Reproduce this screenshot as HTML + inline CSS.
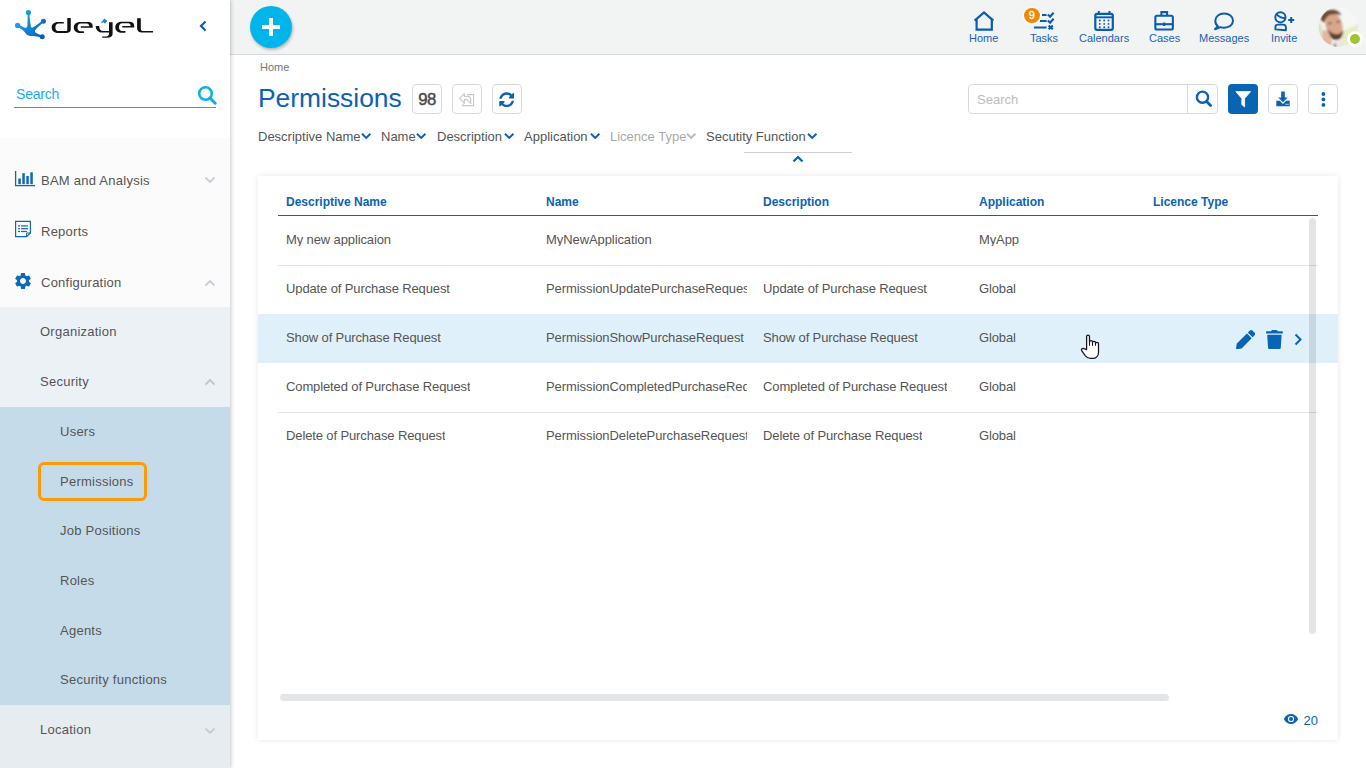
<!DOCTYPE html>
<html><head><meta charset="utf-8">
<style>
*{box-sizing:border-box;margin:0;padding:0}
html,body{width:1366px;height:768px;overflow:hidden;background:#fff;font-family:"Liberation Sans",sans-serif;color:#555}
.abs{position:absolute}
#side{position:absolute;left:0;top:0;width:230px;height:768px;background:#fff;z-index:2;box-shadow:1px 0 4px rgba(0,0,0,.22)}
#hdr{position:absolute;left:230px;top:0;width:1136px;height:55px;background:#f2f3f3;border-bottom:1px solid #d7dbe1}
.txt{position:absolute;white-space:nowrap;line-height:1}
.mi{position:absolute;left:0;width:230px;font-size:13px;color:#555}
#side .txt{letter-spacing:0.25px}
.card{position:absolute;left:258px;top:176px;width:1080px;height:564px;background:#fff;box-shadow:0 0 6px rgba(0,0,0,.10)}
.btn{position:absolute;top:84px;width:30px;height:30px;border:1px solid #d9d9d9;border-radius:4px;background:#fff}
.nav{position:absolute;top:0;width:60px;height:54px;text-align:center}
.nav .lb{position:absolute;left:0;width:60px;top:32px;font-size:11px;color:#1a63b2;line-height:12px}
.nav svg{position:absolute;left:20px;top:11px}
.th{position:absolute;top:196px;font-size:12px;font-weight:bold;color:#0b62b5;line-height:12px;white-space:nowrap}
.td{position:absolute;font-size:13px;color:#555;line-height:13px;white-space:nowrap;overflow:hidden;letter-spacing:-0.12px}
.sep{position:absolute;left:278px;width:1040px;height:1px;background:#e3e3e3}
.flt{position:absolute;top:130px;font-size:13px;color:#555;line-height:13px;white-space:nowrap}
</style></head><body>

<!-- HEADER -->
<div id="hdr"></div>
<!-- nav -->
<svg class="abs" style="left:960px;top:0" width="406" height="54" viewBox="960 0 406 54">
<g fill="none" stroke="#0b5cb0" stroke-width="2.2" stroke-linejoin="miter">
  <path d="M974.6 20.6 L984 12.4 L993.4 20.6"/>
  <path d="M976.6 19.2 V29.6 H991.8 V19.2"/>
</g>
<g fill="none" stroke="#0b5cb0">
  <path d="M1042 14.9 H1046.6 M1040 21 H1046.6 M1034 27.4 H1046.6" stroke-width="2"/>
  <path d="M1047.9 14.4 L1050.1 16.7 L1053.6 12.7 M1047.9 20.5 L1050.1 22.8 L1053.6 18.8" stroke-width="2.1"/>
  <path d="M1048.6 25.6 L1052.8 29.3 M1052.8 25.6 L1048.6 29.3" stroke-width="2.1"/>
</g>
<g fill="none" stroke="#0b5cb0">
  <rect x="1095.3" y="13.8" width="17.5" height="16" rx="1.8" stroke-width="2.2"/>
  <path d="M1095.3 17.3 H1112.8" stroke-width="1.9"/>
  <path d="M1098.8 11 V15 M1109.5 11 V15" stroke-width="2"/>
</g>
<g fill="#0b5cb0">
  <circle cx="1099.8" cy="20.5" r="0.95"/><circle cx="1104.2" cy="20.5" r="0.95"/><circle cx="1108.5" cy="20.5" r="0.95"/>
  <circle cx="1099.8" cy="23.9" r="0.95"/><circle cx="1104.2" cy="23.9" r="0.95"/><circle cx="1108.5" cy="23.9" r="0.95"/>
  <circle cx="1099.8" cy="27.2" r="0.95"/><circle cx="1104.2" cy="27.2" r="0.95"/><circle cx="1108.5" cy="27.2" r="0.95"/>
</g>
<g fill="none" stroke="#0b5cb0" stroke-width="2.1">
  <rect x="1155.35" y="15.8" width="17.5" height="13.75" rx="1.6"/>
  <path d="M1161.4 15.8 V12.1 H1167.1 V15.8"/>
  <path d="M1155.35 24.2 H1172.85"/>
</g>
<rect x="1163" y="22.4" width="2.3" height="3.6" rx="0.6" fill="#0b5cb0"/>
<g fill="none" stroke="#0b5cb0" stroke-width="2">
  <path d="M1217.8 26.2 C1215.6 24.8 1215.3 22.6 1215.3 20.6 C1215.3 16.3 1219.3 13.5 1224.2 13.5 C1229.1 13.5 1233 16.3 1233 20.6 C1233 24.9 1229.1 27.7 1224.2 27.7 C1222.8 27.7 1221.6 27.5 1220.4 27.1 L1215 29.2 Z" stroke-linejoin="round"/>
</g>
<g fill="none" stroke="#0b5cb0">
  <circle cx="1280.4" cy="17.3" r="5.1" stroke-width="2"/>
  <path d="M1276.3 14.2 C1278.5 16.6 1281.5 18.2 1285.4 18.3" stroke-width="1.9"/>
  <path d="M1275.4 29.4 L1275.4 27 C1275.4 25.6 1276.6 24.6 1278 24.6 H1283.2 C1284.8 24.6 1285.9 25.8 1285.9 27.4 V30.2 Z" stroke-width="1.9" stroke-linejoin="round"/>
  <path d="M1291.2 17.1 V23.1 M1288.2 20.1 H1294.2" stroke-width="2"/>
</g>
</svg>
<div class="abs" style="left:1023px;top:7px;width:18px;height:18px;border-radius:50%;background:#fff;opacity:.9"></div>
<div class="abs" style="left:1024px;top:7.8px;width:15.6px;height:15.6px;border-radius:50%;background:#ef8a06;color:#fff;font-size:11px;text-align:center;line-height:15.6px;-webkit-text-stroke:0.3px #fff">9</div>
<div class="txt" style="left:969px;top:33px;font-size:11px;color:#1a63b2">Home</div>
<div class="txt" style="left:1030px;top:33px;font-size:11px;color:#1a63b2">Tasks</div>
<div class="txt" style="left:1079px;top:33px;font-size:11px;color:#1a63b2">Calendars</div>
<div class="txt" style="left:1149px;top:33px;font-size:11px;color:#1a63b2">Cases</div>
<div class="txt" style="left:1199px;top:33px;font-size:11px;color:#1a63b2">Messages</div>
<div class="txt" style="left:1271px;top:33px;font-size:11px;color:#1a63b2">Invite</div>

<!-- avatar -->
<svg class="abs" style="left:1318px;top:7px" width="48" height="48" viewBox="0 0 48 48">
  <defs><clipPath id="av"><circle cx="20.4" cy="19.9" r="19.8"/></clipPath>
  <filter id="bl" x="-20%" y="-20%" width="140%" height="140%"><feGaussianBlur stdDeviation="1"/></filter></defs>
  <g clip-path="url(#av)">
    <rect x="0" y="0" width="41" height="41" fill="#f6f6f4"/>
    <g filter="url(#bl)">
    <path d="M22 26 C28 22 35 19 42 17 V42 H24 Z" fill="#e6edc8"/>
    <path d="M-1 14 L4 18 L7 34 L3 42 H-1 Z" fill="#dbe4c2"/>
    <ellipse cx="16" cy="18.5" rx="8.3" ry="13" fill="#d9a68b" transform="rotate(-14 16 18.5)"/>
    <path d="M2.5 12 C4 6 8 3 13 2.8 C18 2.6 22 4.5 23.2 8.6 C20 7 15.5 6.8 11.5 8 C8.5 9.5 7 12.5 6.8 15.5 C5 15 3.5 13.8 2.5 12 Z" fill="#6b4a34"/>
    <path d="M9.8 22.5 C10.5 29 14 33 18.5 33 C22.5 33 25 29.5 25.4 23 C23 26.5 20.5 27.6 18 27.2 C15 26.8 12.5 25 9.8 22.5 Z" fill="#5a3c2b"/>
    <path d="M10 16.6 L13.6 16.2 M18.6 14.9 L22 14.4" stroke="#4a3224" stroke-width="1.3"/>
    <path d="M4.6 24 C6.5 22.5 9 23 11 26 L14.5 36 L10 41 H4 C4.5 35 4 29 4.6 24 Z" fill="#e2b6a3"/>
    <path d="M13 41 C14 35.5 17.5 33 22 33.2 C26 33.4 28.5 35.5 30 41 Z" fill="#ebe6e0"/>
    <path d="M15.5 41 L17 35.5 L18.5 41 Z" fill="#3b3b40"/>
    </g>
  </g>
  <circle cx="37" cy="32" r="7.8" fill="#fff"/>
  <circle cx="37" cy="32" r="5" fill="#9dc52f"/>
</svg>

<!-- plus -->
<div class="abs" style="left:250px;top:6px;width:42px;height:42px;border-radius:50%;background:#00b5ec;box-shadow:1px 2px 3px rgba(0,0,0,.25)"></div>
<div class="abs" style="left:262px;top:25px;width:18px;height:3.5px;background:#fff"></div>
<div class="abs" style="left:269px;top:17.5px;width:4px;height:18.5px;background:#fff"></div>

<!-- SIDEBAR -->
<div id="side">
  <!-- logo -->
  <svg class="abs" style="left:0;top:0" width="160" height="45" viewBox="0 0 160 45">
    <defs><linearGradient id="lg" gradientUnits="userSpaceOnUse" x1="16" y1="20" x2="44" y2="38"><stop offset="0" stop-color="#1aa8ec"/><stop offset="0.5" stop-color="#0b82d4"/><stop offset="1" stop-color="#0a56ae"/></linearGradient></defs>
    <g fill="url(#lg)"><path d="M31.30 28.90 Q29.83 21.57 29.15 12.56 L27.65 12.64 Q27.85 21.67 27.10 29.10 Z"/><path d="M28.18 29.02 Q23.35 27.50 18.09 24.58 L17.11 26.22 Q22.19 29.46 25.82 32.98 Z"/><path d="M33.76 31.56 Q38.03 26.82 43.93 21.86 L42.87 20.54 Q36.78 25.26 31.24 28.44 Z"/><path d="M31.78 35.68 Q36.51 36.02 41.90 37.60 L42.50 35.80 Q37.22 33.86 33.22 31.32 Z"/>
      <ellipse cx="29.9" cy="31.4" rx="5.6" ry="4.4" transform="rotate(28 29.9 31.4)"/>
      <circle cx="28.4" cy="12.6" r="2.6"/>
      <circle cx="43.4" cy="21.2" r="2.5"/>
      <circle cx="17.6" cy="25.4" r="2.6"/>
      <circle cx="42.2" cy="36.7" r="2.5"/>
    </g>
    <g fill="#121212">
      <path d="M63.8 22 H58.5 C53.5 22 51.7 24.6 51.7 27.4 C51.7 30.3 53.5 32.9 58.5 32.9 H66 C69 32.9 70.75 31.8 70.75 29.5 V18.1 H67.3 V29.5 C67.3 30.6 66.8 31.1 65.8 31.1 H58.8 C56.3 31.1 55.4 29.3 55.4 27.4 C55.4 25.5 56.3 23.4 58.8 23.4 H63.8 Z"/>
      <path id="le" d="M83.9 32.9 H80.5 C75.6 32.9 73.8 30.3 73.8 27.4 C73.8 24.6 75.6 22 80.5 22 H87.5 C91.5 22 92.7 23.8 92.7 26.3 V27.7 H80.8 V26.3 H89.2 C89 24.2 88.2 23.4 87 23.4 H80.8 C78.4 23.4 77.5 25.5 77.5 27.4 C77.5 29.3 78.4 31.2 80.8 31.2 H83.9 Z"/>
      <path d="M95.8 26 H99.2 C99.2 29 100.4 31 103.5 31 H109.5 V32.6 H103 C98 32.6 95.8 30 95.8 26 Z"/>
      <path d="M109 22.2 H112.6 V33.5 C112.6 36.4 110.5 37.8 106 37.8 H102.2 V36.6 H105.5 C108 36.6 109 35.5 109 33.5 Z"/>
      <use href="#le" transform="translate(41.5 -0.2)"/>
      <path d="M137.1 18.3 H140.8 V28.5 C140.8 30.4 141.8 31 143.5 31 H153 V32.6 H143 C139 32.6 137.1 31 137.1 28 Z"/>
    </g>
    <path d="M100.6 23.4 L104.2 18.4 L107.3 20.8 L105 23.7 L103.6 22.3 Z" fill="#1586d8"/>
  </svg>
  <svg class="abs" style="left:197px;top:19px" width="12" height="14" viewBox="0 0 12 14"><path d="M8.5 2.5 L4 7 L8.5 11.5" fill="none" stroke="#0b5cb0" stroke-width="2.2"/></svg>

  <!-- search -->
  <div class="txt" style="left:16px;top:87px;font-size:14px;color:#16aeec;letter-spacing:-0.2px">Search</div>
  <div class="abs" style="left:14px;top:106.5px;width:202px;height:1.6px;background:#0caeec"></div>
  <svg class="abs" style="left:196px;top:84px" width="22" height="22" viewBox="0 0 22 22"><circle cx="9.5" cy="9.5" r="6.3" fill="none" stroke="#0caeec" stroke-width="2.6"/><path d="M14 14 L19.2 19.2" stroke="#0caeec" stroke-width="3" stroke-linecap="round"/></svg>

  <!-- main menu bg -->
  <div class="abs" style="left:0;top:138px;width:230px;height:169px;background:#fbfbfb"></div>
  <div class="abs" style="left:0;top:307px;width:230px;height:100px;background:#ecf1f5"></div>
  <div class="abs" style="left:0;top:407px;width:230px;height:298px;background:#c6dbea"></div>
  <div class="abs" style="left:0;top:705px;width:230px;height:63px;background:#e7ecf0"></div>

  <!-- BAM icon -->
  <svg class="abs" style="left:14px;top:170px" width="22" height="17" viewBox="0 0 22 17"><path d="M1.6 1 V15.6 H21" fill="none" stroke="#1067b8" stroke-width="1.3"/><rect x="4.3" y="8.5" width="2.5" height="5.7" fill="#1067b8"/><rect x="8.3" y="3.2" width="2.5" height="11" fill="#1067b8"/><rect x="12.3" y="6" width="2.5" height="8.2" fill="#1067b8"/><rect x="16.3" y="2.3" width="2.5" height="11.9" fill="#1067b8"/></svg>
  <div class="txt" style="left:41px;top:174px;font-size:13px;color:#555">BAM and Analysis</div>
  <svg class="abs" style="left:204px;top:176px" width="12" height="8" viewBox="0 0 12 8"><path d="M1.5 1.5 L6 6 L10.5 1.5" fill="none" stroke="#c3cdd6" stroke-width="1.8"/></svg>

  <!-- Reports icon -->
  <svg class="abs" style="left:14px;top:220px" width="18" height="18" viewBox="0 0 18 18"><path d="M1.6 1.4 H16.4 V13 L12.6 16.6 H1.6 Z" fill="none" stroke="#1067b8" stroke-width="1.2"/><path d="M12.6 16.6 V13 H16.4" fill="none" stroke="#1067b8" stroke-width="1"/><g fill="#1067b8"><rect x="4" y="5.3" width="2" height="1.2"/><rect x="7" y="5.3" width="7" height="1.2"/><rect x="4" y="8.1" width="2" height="1.2"/><rect x="7" y="8.1" width="7" height="1.2"/><rect x="4" y="10.9" width="2" height="1.2"/><rect x="7" y="10.9" width="6" height="1.2"/></g></svg>
  <div class="txt" style="left:41px;top:225px;font-size:13px;color:#555">Reports</div>

  <!-- Gear -->
  <svg class="abs" style="left:12.6px;top:270.6px" width="20" height="20" viewBox="0 0 24 24"><path fill="#1067b8" d="M19.14 12.94c.04-.3.06-.61.06-.94 0-.32-.02-.64-.07-.94l2.03-1.58a.49.49 0 0 0 .12-.61l-1.92-3.32a.488.488 0 0 0-.59-.22l-2.39.96c-.5-.38-1.03-.7-1.62-.94l-.36-2.54a.484.484 0 0 0-.48-.41h-3.84c-.24 0-.43.17-.47.41l-.36 2.54c-.59.24-1.13.57-1.62.94l-2.39-.96c-.22-.08-.47 0-.59.22L2.74 8.87c-.12.21-.08.47.12.61l2.03 1.58c-.05.3-.09.63-.09.94s.02.64.07.94l-2.03 1.58a.49.49 0 0 0-.12.61l1.92 3.32c.12.22.37.29.59.22l2.39-.96c.5.38 1.03.7 1.62.94l.36 2.54c.05.24.24.41.48.41h3.84c.24 0 .44-.17.47-.41l.36-2.54c.59-.24 1.13-.56 1.62-.94l2.39.96c.22.08.47 0 .59-.22l1.92-3.32c.12-.22.07-.47-.12-.61l-2.01-1.58zM12 15.6c-1.98 0-3.6-1.62-3.6-3.6s1.62-3.6 3.6-3.6 3.6 1.62 3.6 3.6-1.62 3.6-3.6 3.6z"/></svg>
  <div class="txt" style="left:41px;top:276px;font-size:13px;color:#555">Configuration</div>
  <svg class="abs" style="left:204px;top:279px" width="12" height="8" viewBox="0 0 12 8"><path d="M1.5 6.5 L6 2 L10.5 6.5" fill="none" stroke="#c3cdd6" stroke-width="1.8"/></svg>

  <div class="txt" style="left:40px;top:325px;font-size:13px;color:#555">Organization</div>
  <div class="txt" style="left:40px;top:375px;font-size:13px;color:#555">Security</div>
  <svg class="abs" style="left:204px;top:378px" width="12" height="8" viewBox="0 0 12 8"><path d="M1.5 6.5 L6 2 L10.5 6.5" fill="none" stroke="#b8c6d2" stroke-width="1.8"/></svg>

  <div class="txt" style="left:60px;top:425px;font-size:13px;color:#555">Users</div>
  <div class="abs" style="left:38px;top:462px;width:109px;height:39px;border:3px solid #fd9a08;border-radius:6px"></div>
  <div class="txt" style="left:60px;top:475px;font-size:13px;color:#555">Permissions</div>
  <div class="txt" style="left:60px;top:524px;font-size:13px;color:#555">Job Positions</div>
  <div class="txt" style="left:60px;top:574px;font-size:13px;color:#555">Roles</div>
  <div class="txt" style="left:60px;top:624px;font-size:13px;color:#555">Agents</div>
  <div class="txt" style="left:60px;top:673px;font-size:13px;color:#555">Security functions</div>
  <div class="txt" style="left:40px;top:723px;font-size:13px;color:#555">Location</div>
  <svg class="abs" style="left:204px;top:727px" width="12" height="8" viewBox="0 0 12 8"><path d="M1.5 1.5 L6 6 L10.5 1.5" fill="none" stroke="#c3cdd6" stroke-width="1.8"/></svg>
</div>

<!-- MAIN -->
<div class="txt" style="left:260px;top:62px;font-size:11px;color:#777">Home</div>
<div class="txt" style="left:258px;top:85px;font-size:26.4px;color:#0b62b5">Permissions</div>
<div class="btn" style="left:412px"><div class="txt" style="left:0;width:28px;top:6.5px;text-align:center;font-size:16.8px;color:#4a4a4a;-webkit-text-stroke:0.45px #4a4a4a;letter-spacing:-0.6px">98</div></div>
<div class="btn" style="left:452px"><svg class="abs" style="left:-453px;top:-85px" width="540" height="130" viewBox="0 0 540 130"><path d="M459.6 98.4 L464.3 93.6 V96.3 H467.2 C469.5 96.3 470.8 97.9 470.8 100.1 V103.4 L468.3 101.2 C468.1 100.1 467.2 99.6 465.8 99.6 H464.3 V103.2 Z" fill="none" stroke="#c6c6c6" stroke-width="1.1" stroke-linejoin="round"/><path d="M467 94.6 H473.6 V105.6 H462.8 V103.4" fill="none" stroke="#c6c6c6" stroke-width="1.1"/></svg></div>
<div class="btn" style="left:492px"><svg class="abs" style="left:6px;top:6.8px" width="15.4" height="15.4" viewBox="0 0 512 512"><path fill="#0b62b5" d="M370.72 133.28C339.458 104.008 298.888 87.962 255.848 88c-77.458.068-144.328 53.178-162.791 126.85-1.344 5.363-6.122 9.15-11.651 9.15H24.103c-7.498 0-13.194-6.807-11.807-14.176C33.933 94.924 134.813 8 256 8c66.448 0 126.791 26.136 171.315 68.685L463.03 40.97C478.149 25.851 504 36.559 504 57.941V192c0 13.255-10.745 24-24 24H345.941c-21.382 0-32.09-25.851-16.971-40.971l41.75-41.749zM32 296h134.059c21.382 0 32.09 25.851 16.971 40.971l-41.75 41.75c31.262 29.273 71.835 45.319 114.876 45.28 77.418-.07 144.315-53.144 162.787-126.849 1.344-5.363 6.122-9.15 11.651-9.15h57.304c7.498 0 13.194 6.807 11.807 14.176C478.067 417.076 377.187 504 256 504c-66.448 0-126.791-26.136-171.315-68.685L48.97 471.03C33.851 486.149 8 475.441 8 454.059V320c0-13.255 10.745-24 24-24z"/></svg></div>

<!-- search & tools -->
<div class="abs" style="left:968px;top:84px;width:250px;height:30px;border:1px solid #d9d9d9;border-radius:4px;background:#fff"></div>
<div class="abs" style="left:1187px;top:85px;width:1px;height:28px;background:#d9d9d9"></div>
<div class="txt" style="left:977px;top:93px;font-size:13px;color:#bdbdbd">Search</div>
<svg class="abs" style="left:1193px;top:88px" width="22" height="22" viewBox="0 0 22 22"><circle cx="9.5" cy="9.2" r="5.6" fill="none" stroke="#0b62b5" stroke-width="2.4"/><path d="M13.6 13.4 L17.6 17.4" stroke="#0b62b5" stroke-width="2.8" stroke-linecap="round"/></svg>
<div class="abs" style="left:1228px;top:84px;width:30px;height:30px;border-radius:4px;background:#0a64b4"></div>
<svg class="abs" style="left:1228px;top:84px" width="30" height="30" viewBox="0 0 30 30"><path d="M7.8 7.6 H22.6 L16.6 14.5 V23 L13.8 20.5 V14.5 Z" fill="#fff" stroke="#fff" stroke-width="0.8" stroke-linejoin="round"/></svg>
<div class="btn" style="left:1268px"><svg class="abs" style="left:0;top:0" width="28" height="28" viewBox="0 0 28 28"><path d="M12.2 6.5 H15.8 V12.5 H18.8 L14 17.3 L9.2 12.5 H12.2 Z" fill="#0b62b5"/><path d="M7.3 15.8 H10.8 L14 19 L17.2 15.8 H20.7 V21.3 H7.3 Z" fill="#0b62b5"/><rect x="16.6" y="18.8" width="1.2" height="1" fill="#fff"/><rect x="18.4" y="18.8" width="1.2" height="1" fill="#fff"/></svg></div>
<div class="btn" style="left:1308px"><svg class="abs" style="left:0;top:0" width="28" height="28" viewBox="0 0 28 28"><circle cx="14.4" cy="9" r="1.9" fill="#0b62b5"/><circle cx="14.4" cy="14.4" r="1.9" fill="#0b62b5"/><circle cx="14.4" cy="19.9" r="1.9" fill="#0b62b5"/></svg></div>

<div class="flt" style="left:258px">Descriptive Name</div>
<div class="flt" style="left:381px">Name</div>
<div class="flt" style="left:437px">Description</div>
<div class="flt" style="left:524px">Application</div>
<div class="flt" style="left:610px;color:#aaa">Licence Type</div>
<div class="flt" style="left:706px">Secutity Function</div>

<svg class="abs" style="left:360.5px;top:132px" width="11" height="8" viewBox="0 0 11 8"><path d="M1 1.8 L5.2 5.9 L9.4 1.8" fill="none" stroke="#0b62b5" stroke-width="2"/></svg>
<svg class="abs" style="left:415.5px;top:132px" width="11" height="8" viewBox="0 0 11 8"><path d="M1 1.8 L5.2 5.9 L9.4 1.8" fill="none" stroke="#0b62b5" stroke-width="2"/></svg>
<svg class="abs" style="left:503.5px;top:132px" width="11" height="8" viewBox="0 0 11 8"><path d="M1 1.8 L5.2 5.9 L9.4 1.8" fill="none" stroke="#0b62b5" stroke-width="2"/></svg>
<svg class="abs" style="left:589.5px;top:132px" width="11" height="8" viewBox="0 0 11 8"><path d="M1 1.8 L5.2 5.9 L9.4 1.8" fill="none" stroke="#0b62b5" stroke-width="2"/></svg>
<svg class="abs" style="left:685.5px;top:132px" width="11" height="8" viewBox="0 0 11 8"><path d="M1 1.8 L5.2 5.9 L9.4 1.8" fill="none" stroke="#bbbbbb" stroke-width="2"/></svg>
<svg class="abs" style="left:806.5px;top:132px" width="11" height="8" viewBox="0 0 11 8"><path d="M1 1.8 L5.2 5.9 L9.4 1.8" fill="none" stroke="#0b62b5" stroke-width="2"/></svg>
<div class="abs" style="left:744px;top:152px;width:108px;height:1px;background:#d0d0d0"></div>
<svg class="abs" style="left:792px;top:155px" width="12" height="8" viewBox="0 0 12 8"><path d="M1.5 6.5 L6 2 L10.5 6.5" fill="none" stroke="#0b62b5" stroke-width="2.2"/></svg>
<div class="card"></div>
<div class="th" style="left:286px">Descriptive Name</div>
<div class="th" style="left:546px">Name</div>
<div class="th" style="left:763px">Description</div>
<div class="th" style="left:979px">Application</div>
<div class="th" style="left:1153px">Licence Type</div>
<div class="abs" style="left:278px;top:215px;width:1040px;height:1px;background:#0a62b4"></div>

<div class="abs" style="left:258px;top:314px;width:1080px;height:49px;background:#dff0fa"></div>
<div class="td" style="left:286px;top:233px">My new applicaion</div>
<div class="td" style="left:546px;top:233px;width:200.7px;letter-spacing:-0.08px">MyNewApplication</div>
<div class="td" style="left:979px;top:233px">MyApp</div>
<div class="td" style="left:286px;top:282px">Update of Purchase Request</div>
<div class="td" style="left:546px;top:282px;width:200.7px;letter-spacing:-0.08px">PermissionUpdatePurchaseRequest</div>
<div class="td" style="left:763px;top:282px">Update of Purchase Request</div>
<div class="td" style="left:979px;top:282px">Global</div>
<div class="td" style="left:286px;top:331px">Show of Purchase Request</div>
<div class="td" style="left:546px;top:331px;width:200.7px;letter-spacing:-0.08px">PermissionShowPurchaseRequest</div>
<div class="td" style="left:763px;top:331px">Show of Purchase Request</div>
<div class="td" style="left:979px;top:331px">Global</div>
<div class="td" style="left:286px;top:380px">Completed of Purchase Request</div>
<div class="td" style="left:546px;top:380px;width:200.7px;letter-spacing:-0.08px">PermissionCompletedPurchaseRequest</div>
<div class="td" style="left:763px;top:380px">Completed of Purchase Request</div>
<div class="td" style="left:979px;top:380px">Global</div>
<div class="td" style="left:286px;top:429px">Delete of Purchase Request</div>
<div class="td" style="left:546px;top:429px;width:200.7px;letter-spacing:-0.08px">PermissionDeletePurchaseRequest</div>
<div class="td" style="left:763px;top:429px">Delete of Purchase Request</div>
<div class="td" style="left:979px;top:429px">Global</div>
<div class="sep" style="top:265px"></div>
<div class="sep" style="top:412px"></div>
<div class="abs" style="left:1309px;top:218px;width:7px;height:416px;border-radius:4px;background:rgba(0,0,10,0.105)"></div>
<div class="abs" style="left:280px;top:694px;width:889px;height:7px;border-radius:4px;background:#e4e5e7"></div>
<svg class="abs" style="left:1235.8px;top:329.8px" width="19.2" height="19.2" viewBox="0 0 512 512"><path fill="#0a64b4" d="M497.9 142.1l-46.1 46.1c-4.7 4.7-12.3 4.7-17 0l-111-111c-4.7-4.7-4.7-12.3 0-17l46.1-46.1c18.7-18.7 49.1-18.7 67.9 0l60.1 60.1c18.8 18.7 18.8 49.1 0 67.9zM284.2 99.8L21.6 362.4.4 483.9c-2.9 16.4 11.4 30.6 27.8 27.8l121.5-21.3 262.6-262.6c4.7-4.7 4.7-12.3 0-17l-111-111c-4.8-4.7-12.4-4.7-17.1 0z"/></svg>
<svg class="abs" style="left:1266px;top:330px" width="16.8" height="19.2" viewBox="0 0 448 512"><path fill="#0a64b4" d="M432 32H312l-9.4-18.7A24 24 0 0 0 281.1 0H166.8a23.72 23.72 0 0 0-21.4 13.3L136 32H16A16 16 0 0 0 0 48v32a16 16 0 0 0 16 16h416a16 16 0 0 0 16-16V48a16 16 0 0 0-16-16zM53.2 467a48 48 0 0 0 47.9 45h245.8a48 48 0 0 0 47.9-45L416 128H32z"/></svg>
<svg class="abs" style="left:1293px;top:333px" width="11" height="13" viewBox="0 0 11 13"><path d="M2.5 1.5 L7.5 6.5 L2.5 11.5" fill="none" stroke="#0b62b5" stroke-width="2"/></svg>
<svg class="abs" style="left:1074px;top:328px" width="32" height="34" viewBox="0 0 32 34"><path d="M12.6 21.6 V8.6 C12.6 6.7 15.5 6.7 15.5 8.6 V13.9 C15.5 12.1 18.5 12.1 18.5 13.9 V14.6 C18.5 12.8 21.5 12.8 21.5 14.6 V15.6 C21.5 13.8 24.5 13.8 24.5 15.6 V24.3 C24.5 28 22 30.4 18.5 30.4 H16.6 C14.2 30.4 12.6 29.4 11.2 27.6 L7.7 22.7 C6.9 21.3 8.5 19.7 9.9 20.6 Z" fill="#fff" stroke="#151520" stroke-width="1.25" stroke-linejoin="round"/><path d="M15.5 13.9 V17.8 M18.5 14.6 V17.8 M21.5 15.6 V17.8" stroke="#151520" stroke-width="1.1"/></svg>
<svg class="abs" style="left:1283px;top:713px" width="16" height="12" viewBox="0 0 16 12"><path d="M0.8 6 C2.5 2.6 5 1 8 1 C11 1 13.5 2.6 15.2 6 C13.5 9.4 11 11 8 11 C5 11 2.5 9.4 0.8 6 Z" fill="#0b62b5"/><circle cx="8" cy="6" r="3.1" fill="#fff"/><circle cx="8" cy="6" r="2" fill="#0b62b5"/></svg>
<div class="txt" style="left:1303.5px;top:713.5px;font-size:13px;color:#0b62b5">20</div>
</body></html>
